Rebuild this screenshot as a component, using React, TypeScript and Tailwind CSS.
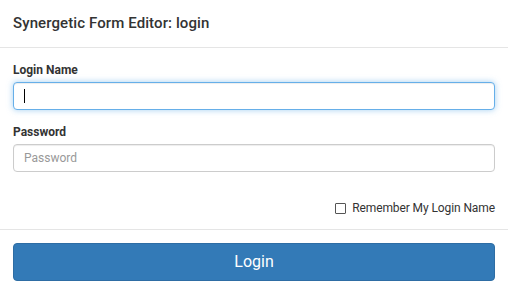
export default function App() {
  return (
    <div className="w-[508px] h-[294px] bg-white text-[#333] flex flex-col font-['Roboto','Liberation_Sans',sans-serif]">
      <div className="h-[48px] shrink-0 border-b border-[#e5e5e5] px-[13px] flex items-center">
        <h4 className="text-[15px] font-medium leading-[17px] tracking-[0.1px] text-[#333]">Synergetic Form Editor: login</h4>
      </div>

      <div className="px-[13px] pt-[14px] pb-[12px] border-b border-[#e5e5e5] flex flex-col">
        <label className="text-[12px] font-bold leading-[17px] mb-[3px]">Login Name</label>
        <div className="relative h-[28px] rounded-[4px] border border-[#66afe9] shadow-[inset_0_1px_1px_rgba(0,0,0,.075),0_0_6px_rgba(102,175,233,.6)] bg-white">
          <span className="absolute left-[10px] top-[6px] w-px h-[14px] bg-black" />
        </div>

        <label className="text-[12px] font-bold leading-[17px] mt-[14px] mb-[3px]">Password</label>
        <div className="h-[28px] rounded-[4px] border border-[#ccc] shadow-[inset_0_1px_1px_rgba(0,0,0,.075)] bg-white flex items-center px-[10px]">
          <span className="text-[12px] text-[#999]">Password</span>
        </div>

        <div className="mt-[28px] flex justify-end items-center gap-[6px]">
          <span className="w-[11px] h-[11px] border border-[#555] rounded-[1px] bg-white" />
          <span className="text-[12px] leading-[17px] tracking-[-0.1px] text-[#333]">Remember My Login Name</span>
        </div>
      </div>

      <div className="px-[13px] pt-[13px]">
        <button className="w-full h-[38px] rounded-[4px] bg-[#337ab7] border border-[#2e6da4] text-white text-[16px] leading-[22px]">
          Login
        </button>
      </div>
    </div>
  )
}
